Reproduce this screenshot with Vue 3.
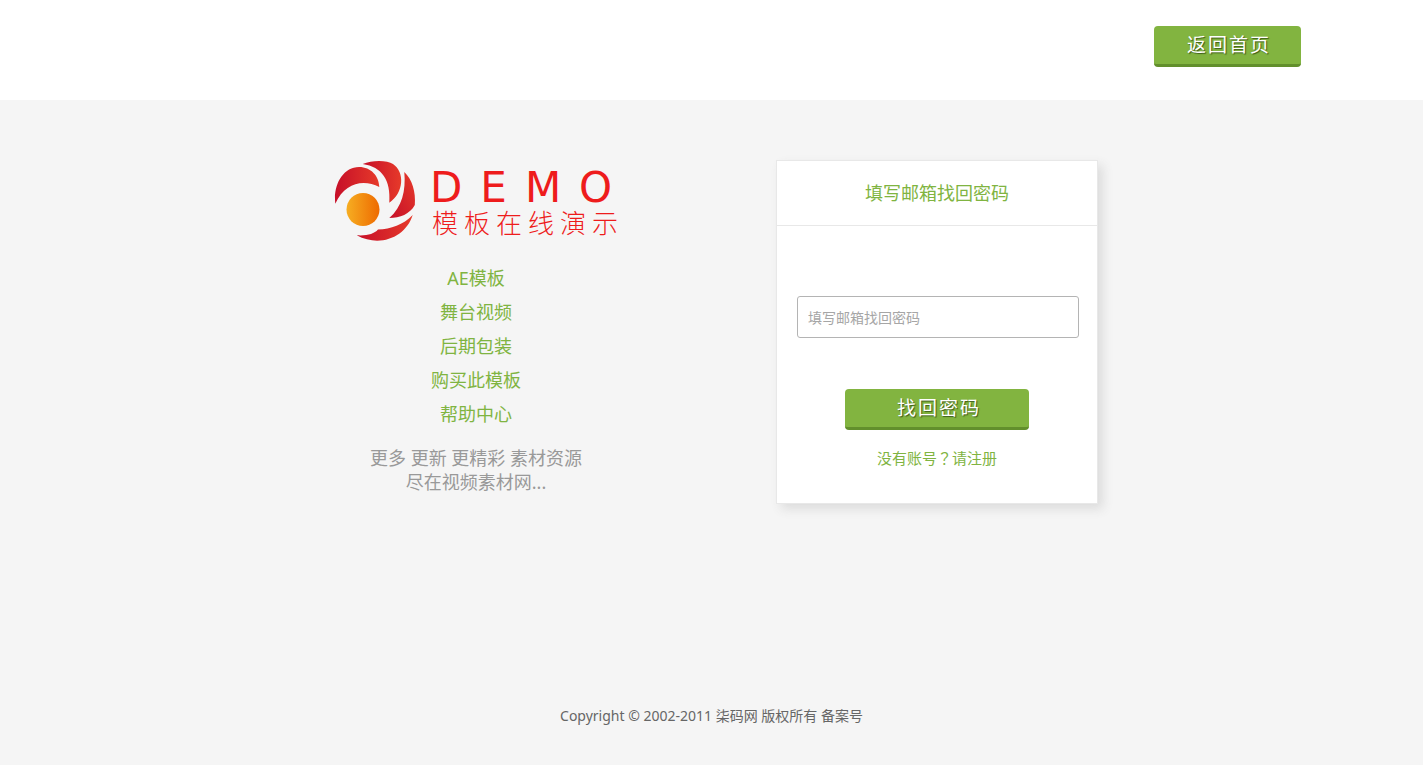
<script setup>
const links = ['AE模板', '舞台视频', '后期包装', '购买此模板', '帮助中心']
</script>

<template>
  <div class="page">
    <header class="top">
      <div class="top-inner">
        <button type="button" class="btn home">返回首页</button>
      </div>
    </header>

    <main class="content">
      <section class="intro">
        <div class="logo">
          <svg class="mark" viewBox="0 0 82 82" aria-hidden="true">
            <defs>
              <linearGradient id="red" x1="0" y1="0" x2="1" y2="0">
                <stop offset="0" stop-color="#c60f28" />
                <stop offset="1" stop-color="#e63a2a" />
              </linearGradient>
              <linearGradient id="redDown" x1="1" y1="0" x2="0" y2="1">
                <stop offset="0" stop-color="#e63a2a" />
                <stop offset="1" stop-color="#c60f28" />
              </linearGradient>
              <linearGradient id="orange" x1="0" y1="0" x2="1" y2="0">
                <stop offset="0" stop-color="#f6ae22" />
                <stop offset="1" stop-color="#ee6a00" />
              </linearGradient>
            </defs>
            <path fill="url(#red)" d="M1.3 43.7C-1 25 9 7 25 7C37 7 45 16 45.3 27C30 19 11 22 1.3 43.7Z" />
            <path fill="url(#red)" d="M28.7 4C38 0 53 0 59 4C71 12 70 33 55.3 42.7C57 20 48 7 28.7 4Z" />
            <path fill="url(#redDown)" d="M70.3 12C78 19 82 32 80.8 45C76 54 66 58 55.3 58C68 47 72 31 70.3 12Z" />
            <path fill="url(#red)" d="M78.7 55C72 77 46 88 22.7 75.3C33 76 40 74 44 69.5C57 69 69 65 78.7 55Z" />
            <circle cx="29" cy="49.5" r="16.5" fill="url(#orange)" />
          </svg>
          <div class="logo-text">
            <div class="logo-name">DEMO</div>
            <div class="logo-sub">模板在线演示</div>
          </div>
        </div>
        <nav class="links">
          <a v-for="item in links" :key="item" href="#">{{ item }}</a>
        </nav>
        <p class="slogan">更多 更新 更精彩 素材资源<br />尽在视频素材网...</p>
      </section>

      <section class="side">
        <form class="card" @submit.prevent>
          <h1>填写邮箱找回密码</h1>
          <div class="card-body">
            <div class="field">
              <input type="email" aria-label="填写邮箱找回密码" placeholder="填写邮箱找回密码" />
            </div>
            <button type="submit" class="btn submit">找回密码</button>
            <a href="#" class="register">没有账号<span class="mid">？</span>请注册</a>
          </div>
        </form>
      </section>
    </main>

    <footer class="foot">Copyright © 2002-2011 柒码网 版权所有 备案号</footer>
  </div>
</template>

<style>
body {
  background: #f5f5f5;
}
</style>

<style scoped>
.page,
.page input,
.page button {
  font-family: "Noto Sans", "Noto Sans CJK SC", sans-serif;
}

.page {
  font-size: 18px;
  color: #999;
}

.page * {
  box-sizing: border-box;
}

a {
  color: #80b441;
  text-decoration: none;
}

.top {
  height: 100px;
  padding: 26px 20px 0;
  background: #fff;
}

.top-inner {
  display: flex;
  justify-content: flex-end;
  max-width: 1178px;
  margin: 0 auto;
}

.btn {
  height: 41px;
  padding: 0 0 0 4px;
  border: 0;
  border-bottom: 3px solid #628f2c;
  border-radius: 4px;
  background: #82b440;
  color: #fff;
  font-size: 19px;
  line-height: 38px;
  letter-spacing: 2px;
  text-shadow: 1px 1px 1px #3c5a18;
  cursor: pointer;
}

.home {
  width: 147px;
}

.content {
  display: grid;
  grid-template-columns: 1fr 1fr;
  align-items: start;
  max-width: 932px;
  margin: 0 auto;
  padding: 60px 10px 0 0;
}

.intro {
  display: flex;
  flex-direction: column;
  align-items: center;
}

.logo {
  display: flex;
  gap: 14px;
  width: 284px;
  height: 82px;
}

.mark {
  flex: none;
  width: 82px;
  height: 82px;
}

.logo-text {
  padding-top: 7px;
  color: #ee1c1c;
  white-space: nowrap;
}

.logo-name {
  font-family: "DejaVu Sans", sans-serif;
  font-size: 42px;
  line-height: 41px;
  letter-spacing: 18px;
}

.logo-sub {
  padding-left: 2px;
  font-family: "Noto Sans CJK SC", sans-serif;
  font-size: 26px;
  font-weight: 300;
  line-height: 28px;
  letter-spacing: 6px;
}

.links {
  display: flex;
  flex-direction: column;
  align-items: center;
  margin-top: 19px;
  line-height: 34px;
}

.slogan {
  margin: 15px 0 0;
  line-height: 24px;
  text-align: center;
}

.side {
  display: flex;
  justify-content: center;
}

.card {
  width: 322px;
  border: 1px solid #e8e8e8;
  background: #fff;
  box-shadow: 5px 5px 10px #dcdcdc;
}

h1 {
  margin: 0;
  border-bottom: 1px solid #e8e8e8;
  color: #80b441;
  font-size: 18px;
  font-weight: 400;
  line-height: 64px;
  text-align: center;
}

.card-body {
  display: flex;
  flex-direction: column;
  align-items: center;
  padding: 70px 0 32px;
}

.field {
  align-self: stretch;
  display: flex;
  padding: 0 18px 0 20px;
}

input {
  flex: 1;
  min-width: 0;
  height: 42px;
  padding: 0 10px;
  border: 1px solid #b4b4b4;
  border-radius: 3px;
  background: #fff;
  color: #666;
  font-size: 14px;
}

input::placeholder {
  color: #a6a6a6;
  opacity: 1;
}

.submit {
  width: 184px;
  margin-top: 51px;
}

.register {
  margin-top: 16px;
  font-size: 15px;
  line-height: 25px;
}

.mid {
  font-family: "Noto Sans CJK TC", sans-serif;
  line-height: 1;
}

.foot {
  margin-top: 200px;
  padding-bottom: 37px;
  color: #666;
  font-size: 14px;
  line-height: 24px;
  text-align: center;
}
</style>
